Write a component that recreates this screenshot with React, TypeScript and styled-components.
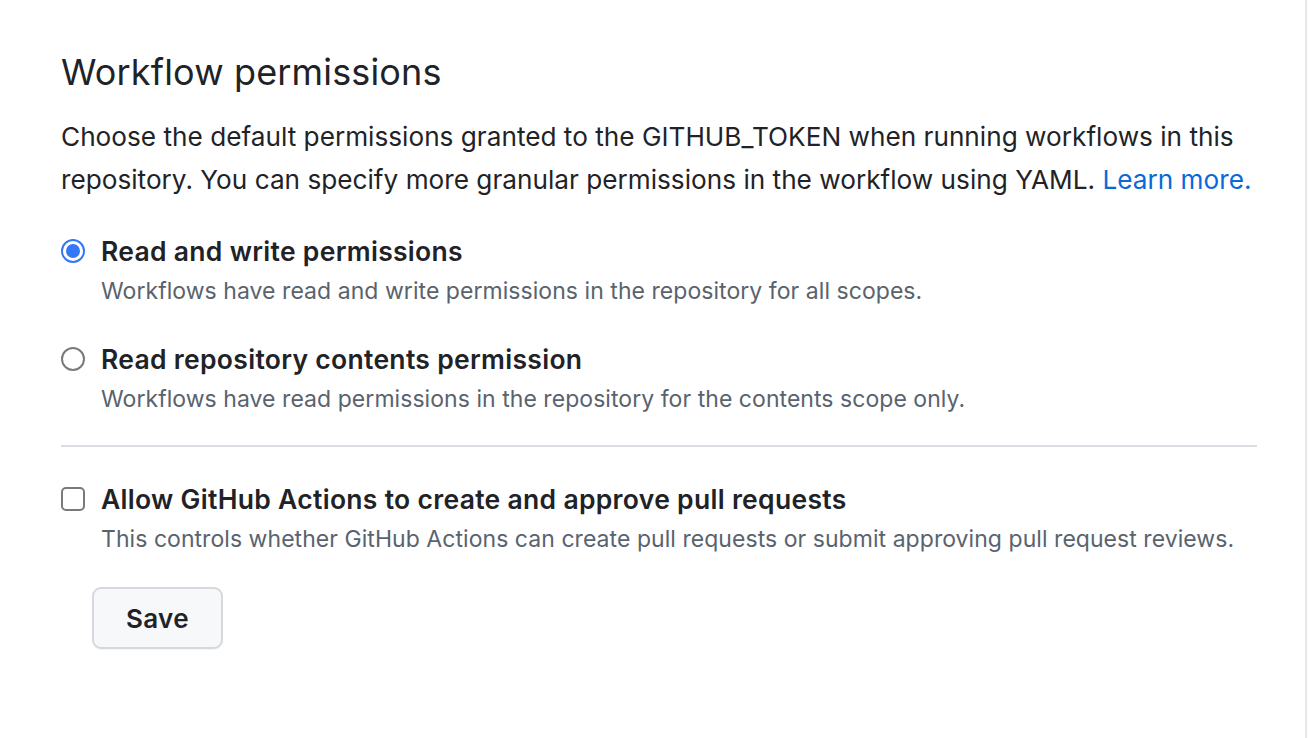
import React from "react";
import styled, { createGlobalStyle } from "styled-components";

const Global = createGlobalStyle`
  html, body { margin: 0; padding: 0; background: #ffffff; }
  body { font-family: Inter, "Noto Sans", "Liberation Sans", sans-serif; color: #1f2328; }
`;

const Page = styled.div`
  display: flex;
  width: 1308px;
  height: 738px;
  box-sizing: border-box;
`;

const Main = styled.main`
  flex: 1;
  padding: 50px 0 0 61px;
  box-sizing: border-box;
`;

const Content = styled.div`
  width: 1196px;
`;

const RightRule = styled.div`
  width: 2px;
  margin-right: 1px;
  background: #e8e8e8;
`;

const Title = styled.h2`
  margin: 0;
  font-size: 36px;
  line-height: 44px;
  font-weight: 400;
  letter-spacing: 0.15px;
  color: #1f2328;
`;

const Intro = styled.p`
  margin: 21px 0 0;
  font-size: 26.2px;
  line-height: 43px;
  white-space: nowrap;
  color: #1f2328;
`;

const Link = styled.a`
  color: #0969da;
  text-decoration: none;
`;

const Option = styled.label<{ $top: number }>`
  display: grid;
  grid-template-columns: 24px 1fr;
  column-gap: 16px;
  row-gap: 8px;
  margin-top: ${(p) => p.$top}px;
  cursor: pointer;
`;

const ControlCell = styled.span`
  display: flex;
  align-items: center;
  height: 32px;
`;

const Radio = styled.span<{ $checked?: boolean }>`
  box-sizing: border-box;
  width: 24px;
  height: 24px;
  border-radius: 50%;
  border: 2px solid ${(p) => (p.$checked ? "#3478f6" : "#7a7a7a")};
  display: flex;
  align-items: center;
  justify-content: center;
  &::after {
    content: "";
    width: 14px;
    height: 14px;
    border-radius: 50%;
    background: ${(p) => (p.$checked ? "#3478f6" : "transparent")};
  }
`;

const Checkbox = styled.span`
  box-sizing: border-box;
  width: 24px;
  height: 24px;
  border-radius: 5px;
  border: 2px solid #7a7a7a;
`;

const OptionTitle = styled.span`
  font-size: 26.5px;
  line-height: 32px;
  font-weight: 600;
  letter-spacing: 0.3px;
  color: #1f2328;
`;

const OptionNote = styled.span`
  grid-column: 2;
  font-size: 23px;
  line-height: 32px;
  letter-spacing: 0.05px;
  color: #59636e;
`;

const Divider = styled.hr`
  border: 0;
  height: 2px;
  background: #d8dee4;
  margin: 30px 0 0;
`;

const SaveButton = styled.button`
  margin: 32px 0 0 31px;
  width: 131px;
  height: 62px;
  box-sizing: border-box;
  border: 2px solid #d5d9de;
  border-radius: 9px;
  background: #f6f8fa;
  font-family: inherit;
  font-size: 26px;
  font-weight: 600;
  letter-spacing: 0.3px;
  color: #1f2328;
  box-shadow: 0 1px 0 rgba(31, 35, 40, 0.04);
  cursor: pointer;
`;

export default function App() {
  return (
    <Page>
      <Global />
      <Main>
        <Content>
          <Title>Workflow permissions</Title>
          <Intro>
            Choose the default permissions granted to the GITHUB_TOKEN when running workflows in this
            <br />
            repository. You can specify more granular permissions in the workflow using YAML.{" "}
            <Link href="#">Learn more.</Link>
          </Intro>
          <Option $top={34}>
            <ControlCell>
              <Radio $checked />
            </ControlCell>
            <OptionTitle>Read and write permissions</OptionTitle>
            <OptionNote>Workflows have read and write permissions in the repository for all scopes.</OptionNote>
          </Option>
          <Option $top={36}>
            <ControlCell>
              <Radio />
            </ControlCell>
            <OptionTitle>Read repository contents permission</OptionTitle>
            <OptionNote>Workflows have read permissions in the repository for the contents scope only.</OptionNote>
          </Option>
          <Divider />
          <Option $top={36}>
            <ControlCell>
              <Checkbox />
            </ControlCell>
            <OptionTitle>Allow GitHub Actions to create and approve pull requests</OptionTitle>
            <OptionNote>
              This controls whether GitHub Actions can create pull requests or submit approving pull request reviews.
            </OptionNote>
          </Option>
          <SaveButton>Save</SaveButton>
        </Content>
      </Main>
      <RightRule />
    </Page>
  );
}
